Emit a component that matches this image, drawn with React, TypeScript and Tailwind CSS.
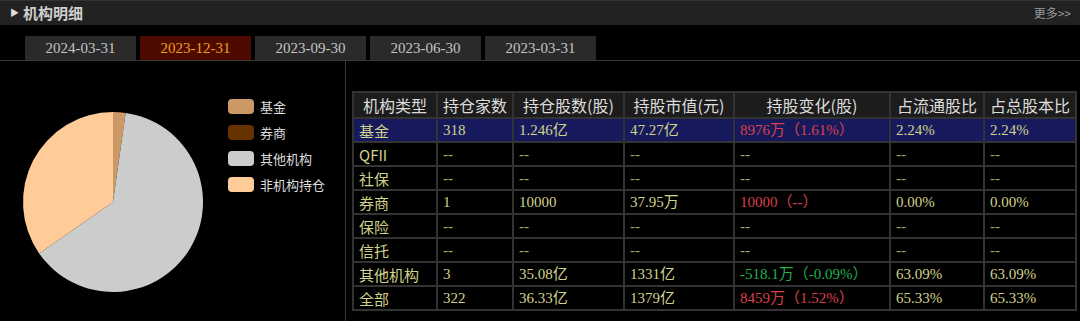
import React from 'react';

const tabs = ['2024-03-31', '2023-12-31', '2023-09-30', '2023-06-30', '2023-03-31'];

const legend = [
  { name: '基金', color: '#cc9966' },
  { name: '券商', color: '#663300' },
  { name: '其他机构', color: '#cccccc' },
  { name: '非机构持仓', color: '#ffcc99' },
];

// 占总股本比，非机构 = 100 - 全部
const slices = [
  { pct: 2.24, color: '#cc9966' },
  { pct: 0, color: '#663300' },
  { pct: 63.09, color: '#cccccc' },
  { pct: 34.67, color: '#ffcc99' },
];

type Row = {
  type: string;
  count: string;
  shares: string;
  value: string;
  change: string;
  tone?: 'up' | 'down';
  flow: string;
  total: string;
  active?: boolean;
};

const rows: Row[] = [
  { type: '基金', count: '318', shares: '1.246亿', value: '47.27亿', change: '8976万（1.61%）', tone: 'up', flow: '2.24%', total: '2.24%', active: true },
  { type: 'QFII', count: '--', shares: '--', value: '--', change: '--', flow: '--', total: '--' },
  { type: '社保', count: '--', shares: '--', value: '--', change: '--', flow: '--', total: '--' },
  { type: '券商', count: '1', shares: '10000', value: '37.95万', change: '10000（--）', tone: 'up', flow: '0.00%', total: '0.00%' },
  { type: '保险', count: '--', shares: '--', value: '--', change: '--', flow: '--', total: '--' },
  { type: '信托', count: '--', shares: '--', value: '--', change: '--', flow: '--', total: '--' },
  { type: '其他机构', count: '3', shares: '35.08亿', value: '1331亿', change: '-518.1万（-0.09%）', tone: 'down', flow: '63.09%', total: '63.09%' },
  { type: '全部', count: '322', shares: '36.33亿', value: '1379亿', change: '8459万（1.52%）', tone: 'up', flow: '65.33%', total: '65.33%' },
];

const heads = ['机构类型', '持仓家数', '持仓股数(股)', '持股市值(元)', '持股变化(股)', '占流通股比', '占总股本比'];
const widths = ['w-[84px]', 'w-[76px]', 'w-[111px]', 'w-[110px]', 'w-[156px]', 'w-[94px]', 'w-[92px]'];

function Pie() {
  const cx = 113;
  const cy = 141;
  const r = 90;
  let start = 0;
  const pt = (deg: number) => {
    const a = (deg * Math.PI) / 180;
    return `${(cx + r * Math.sin(a)).toFixed(2)} ${(cy - r * Math.cos(a)).toFixed(2)}`;
  };
  return (
    <svg width="228" height="260" className="shrink-0">
      {slices.map((s, i) => {
        const sweep = (s.pct / 100) * 360;
        const from = start;
        start += sweep;
        if (sweep <= 0) return null;
        const large = sweep > 180 ? 1 : 0;
        return (
          <path
            key={i}
            d={`M ${cx} ${cy} L ${pt(from)} A ${r} ${r} 0 ${large} 1 ${pt(from + sweep)} Z`}
            fill={s.color}
          />
        );
      })}
    </svg>
  );
}

export default function App() {
  return (
    <div className="w-[1080px] h-[321px] bg-black overflow-hidden" style={{ fontFamily: '"Noto Sans CJK SC", sans-serif' }}>
      {/* 标题栏 */}
      <div className="h-[25px] bg-[#222222] border-t border-[#333333] flex items-center justify-between pl-[10px] pr-[9px]">
        <div className="flex items-center gap-[4px] text-[#cfcfcf] text-[15px] font-bold">
          <span className="text-[9px] text-[#dddddd]">▶</span>
          <span>机构明细</span>
        </div>
        <span className="text-[12px] text-[#9a9a9a]">更多&gt;&gt;</span>
      </div>

      {/* 报告期 */}
      <div className="h-[36px] pt-[11px] pl-[25px] flex gap-[4px] border-b border-[#3a3a3a]">
        {tabs.map((t, i) => (
          <div
            key={t}
            className={`w-[111px] h-[24px] flex items-center justify-center text-[15px] ${
              i === 1 ? 'bg-[#4f0a00] text-[#e9a21c]' : 'bg-[#2a2a2a] text-[#c4c4c4]'
            }`}
            style={{ fontFamily: '"Liberation Serif", "Noto Sans CJK SC", serif' }}
          >
            {t}
          </div>
        ))}
      </div>

      <div className="flex h-[260px]">
        {/* 饼图 */}
        <div className="w-[346px] border-r border-[#3a3a3a] flex">
          <Pie />
          <div className="pt-[38px] flex flex-col gap-[11px]">
            {legend.map((l) => (
              <div key={l.name} className="flex items-center gap-[6px] h-[15px]">
                <span className="w-[26px] h-[15px] rounded-[4px]" style={{ background: l.color }} />
                <span className="text-[13px] text-[#dddddd]">{l.name}</span>
              </div>
            ))}
          </div>
        </div>

        {/* 明细表 */}
        <div className="pt-[30px] pl-[6px]">
          <table className="table-fixed border-collapse" style={{ fontFamily: '"Liberation Serif", "Noto Sans CJK SC", serif' }}>
            <thead>
              <tr className="bg-[#1c1c1c]">
                {heads.map((h, i) => (
                  <th
                    key={h}
                    className={`${widths[i]} h-[24px] p-0 border-2 border-[#333333] text-[16px] font-normal text-[#dcdcdc] text-center`}
                    style={{ fontFamily: '"Noto Sans CJK SC", sans-serif' }}
                  >
                    {h}
                  </th>
                ))}
              </tr>
            </thead>
            <tbody>
              {rows.map((r) => {
                const cells = [r.type, r.count, r.shares, r.value, r.change, r.flow, r.total];
                return (
                  <tr key={r.type} className={r.active ? 'bg-[#161a5c]' : ''}>
                    {cells.map((c, i) => {
                      let color = 'text-[#d2d28c]';
                      if (i === 4 && r.tone === 'up') color = 'text-[#d9404c]';
                      if (i === 4 && r.tone === 'down') color = 'text-[#22b04a]';
                      if (c === '--' && i > 0) color = 'text-[#a8a86a]';
                      return (
                        <td
                          key={i}
                          className={`h-[24px] p-0 pl-[5px] border-2 border-[#333333] text-[15px] leading-none whitespace-nowrap ${color}`}
                          style={i === 0 ? { fontFamily: '"Noto Sans CJK SC", sans-serif' } : undefined}
                        >
                          {c}
                        </td>
                      );
                    })}
                  </tr>
                );
              })}
            </tbody>
          </table>
        </div>
      </div>
    </div>
  );
}
